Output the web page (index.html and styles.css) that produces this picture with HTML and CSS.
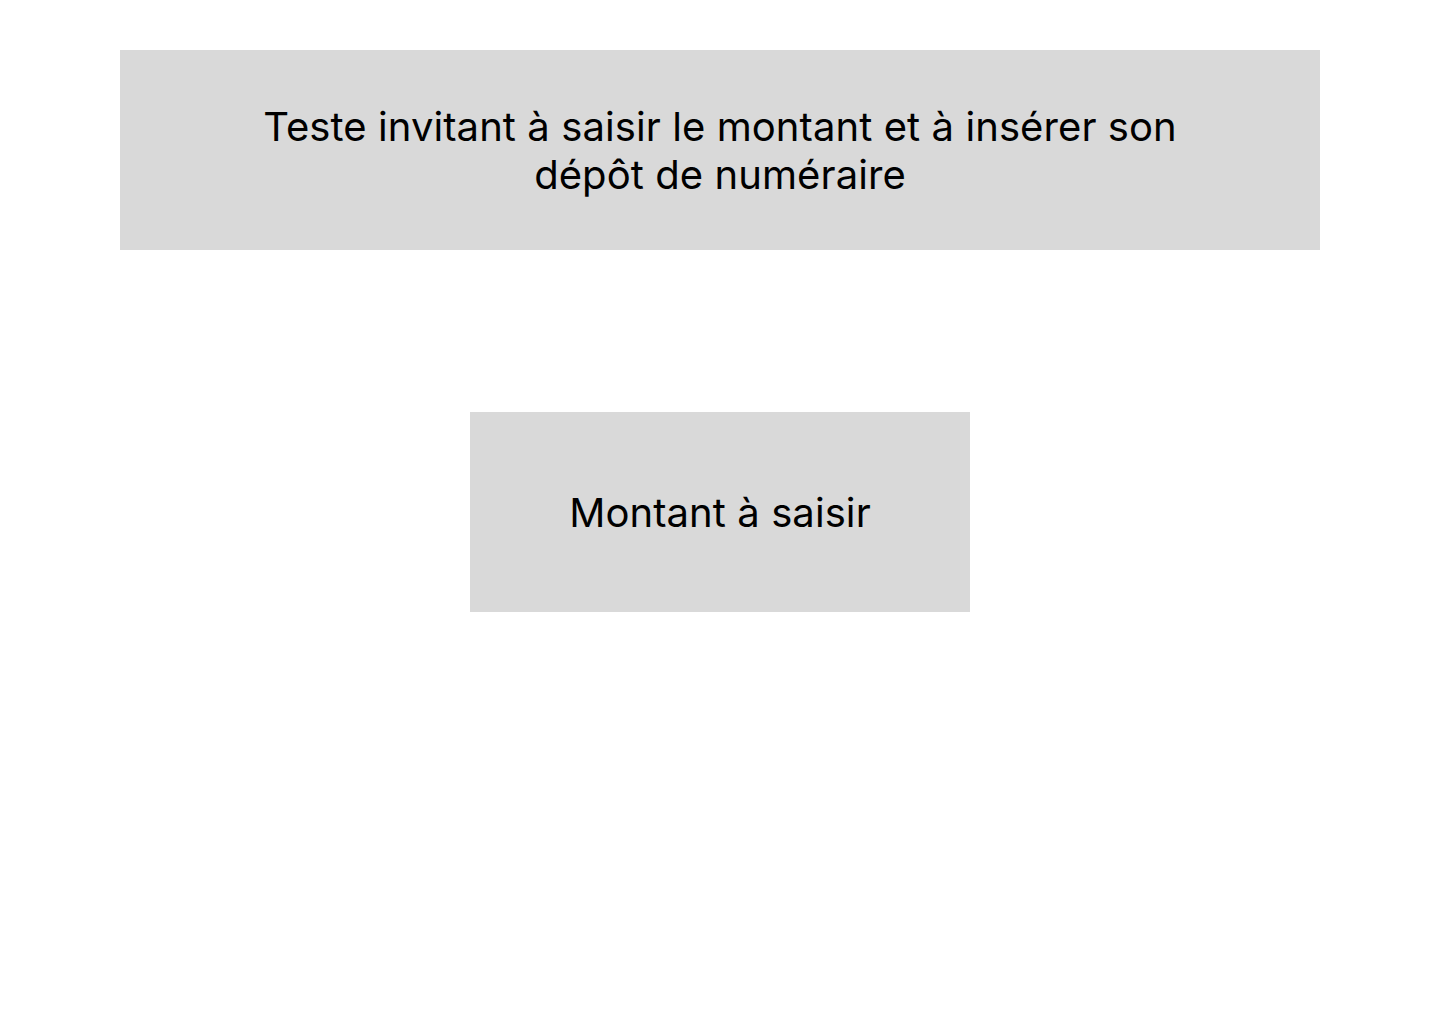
FILE: index.html
```html
<!DOCTYPE html>
<html lang="fr">
<head>
<meta charset="utf-8">
<title>Dépôt de numéraire</title>
<link rel="stylesheet" href="styles.css">
</head>
<body>
<main class="screen">
  <section class="banner">
    <p class="banner-text">Teste invitant à saisir le montant et à insérer son dépôt de numéraire</p>
  </section>
  <section class="amount">
    <p class="amount-text">Montant à saisir</p>
  </section>
</main>
</body>
</html>
```

FILE: styles.css
```css
html, body {
  margin: 0;
  padding: 0;
  background: #ffffff;
}
body {
  font-family: Inter, "Noto Sans", "Liberation Sans", sans-serif;
  color: #000000;
}
.screen {
  width: 1440px;
  height: 1024px;
  display: flex;
  flex-direction: column;
  align-items: center;
  padding-top: 50px;
  box-sizing: border-box;
}
.banner {
  width: 1200px;
  height: 200px;
  background: #d9d9d9;
  display: flex;
  align-items: center;
  justify-content: center;
  padding: 2px 100px 0;
  box-sizing: border-box;
}
.banner-text {
  margin: 0;
  font-size: 40px;
  line-height: 48px;
  letter-spacing: 0.08px;
  text-align: center;
  font-weight: 400;
}
.amount {
  margin-top: 162px;
  width: 500px;
  height: 200px;
  background: #d9d9d9;
  display: flex;
  align-items: center;
  justify-content: center;
  padding-top: 2px;
  box-sizing: border-box;
}
.amount-text {
  margin: 0;
  font-size: 40px;
  line-height: 48px;
  letter-spacing: 0.08px;
  text-align: center;
}
```
